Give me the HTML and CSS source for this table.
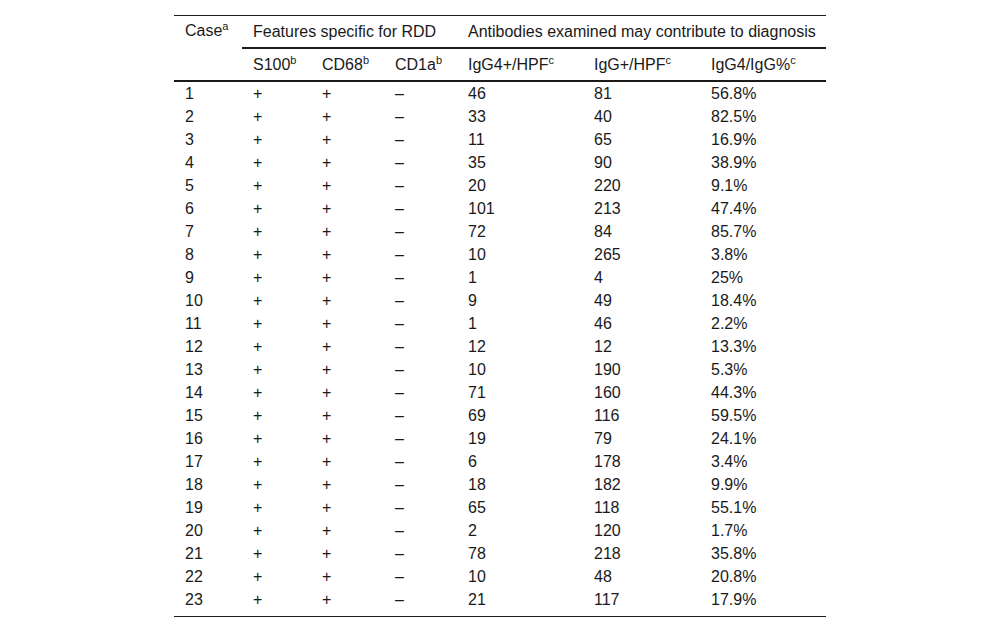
FILE: index.html
```html
<!DOCTYPE html>
<html>
<head>
<meta charset="utf-8">
<link rel="stylesheet" href="styles.css">
</head>
<body>
<div class="page">
<table class="data">
<colgroup>
<col class="c1"><col class="c2"><col class="c3"><col class="c4"><col class="c5"><col class="c6"><col class="c7">
</colgroup>
<thead>
<tr class="h1">
<th rowspan="2" class="case">Case<sup>a</sup></th>
<th colspan="3" class="group">Features specific for RDD</th>
<th colspan="3" class="group">Antibodies examined may contribute to diagnosis</th>
</tr>
<tr class="h2">
<th>S100<sup>b</sup></th>
<th>CD68<sup>b</sup></th>
<th>CD1a<sup>b</sup></th>
<th>IgG4+/HPF<sup>c</sup></th>
<th>IgG+/HPF<sup>c</sup></th>
<th>IgG4/IgG%<sup>c</sup></th>
</tr>
</thead>
<tbody>
<tr><td>1</td><td>+</td><td>+</td><td>–</td><td>46</td><td>81</td><td>56.8%</td></tr>
<tr><td>2</td><td>+</td><td>+</td><td>–</td><td>33</td><td>40</td><td>82.5%</td></tr>
<tr><td>3</td><td>+</td><td>+</td><td>–</td><td>11</td><td>65</td><td>16.9%</td></tr>
<tr><td>4</td><td>+</td><td>+</td><td>–</td><td>35</td><td>90</td><td>38.9%</td></tr>
<tr><td>5</td><td>+</td><td>+</td><td>–</td><td>20</td><td>220</td><td>9.1%</td></tr>
<tr><td>6</td><td>+</td><td>+</td><td>–</td><td>101</td><td>213</td><td>47.4%</td></tr>
<tr><td>7</td><td>+</td><td>+</td><td>–</td><td>72</td><td>84</td><td>85.7%</td></tr>
<tr><td>8</td><td>+</td><td>+</td><td>–</td><td>10</td><td>265</td><td>3.8%</td></tr>
<tr><td>9</td><td>+</td><td>+</td><td>–</td><td>1</td><td>4</td><td>25%</td></tr>
<tr><td>10</td><td>+</td><td>+</td><td>–</td><td>9</td><td>49</td><td>18.4%</td></tr>
<tr><td>11</td><td>+</td><td>+</td><td>–</td><td>1</td><td>46</td><td>2.2%</td></tr>
<tr><td>12</td><td>+</td><td>+</td><td>–</td><td>12</td><td>12</td><td>13.3%</td></tr>
<tr><td>13</td><td>+</td><td>+</td><td>–</td><td>10</td><td>190</td><td>5.3%</td></tr>
<tr><td>14</td><td>+</td><td>+</td><td>–</td><td>71</td><td>160</td><td>44.3%</td></tr>
<tr><td>15</td><td>+</td><td>+</td><td>–</td><td>69</td><td>116</td><td>59.5%</td></tr>
<tr><td>16</td><td>+</td><td>+</td><td>–</td><td>19</td><td>79</td><td>24.1%</td></tr>
<tr><td>17</td><td>+</td><td>+</td><td>–</td><td>6</td><td>178</td><td>3.4%</td></tr>
<tr><td>18</td><td>+</td><td>+</td><td>–</td><td>18</td><td>182</td><td>9.9%</td></tr>
<tr><td>19</td><td>+</td><td>+</td><td>–</td><td>65</td><td>118</td><td>55.1%</td></tr>
<tr><td>20</td><td>+</td><td>+</td><td>–</td><td>2</td><td>120</td><td>1.7%</td></tr>
<tr><td>21</td><td>+</td><td>+</td><td>–</td><td>78</td><td>218</td><td>35.8%</td></tr>
<tr><td>22</td><td>+</td><td>+</td><td>–</td><td>10</td><td>48</td><td>20.8%</td></tr>
<tr class="last"><td>23</td><td>+</td><td>+</td><td>–</td><td>21</td><td>117</td><td>17.9%</td></tr>
</tbody>
</table>
</div>
</body>
</html>
```

FILE: styles.css
```css
html, body {
  margin: 0;
  padding: 0;
  background: #fff;
}
.page {
  padding-top: 15px;
  display: flex;
  justify-content: center;
}
.data {
  width: 652px;
  table-layout: fixed;
  border-collapse: collapse;
  font-family: "Liberation Sans", Arial, sans-serif;
  font-size: 16px;
  color: #1a1a1a;
  border-top: 1px solid #1a1a1a;
  border-bottom: 1px solid #1a1a1a;
}
.c1 { width: 68px; }
.c2 { width: 69px; }
.c3 { width: 73px; }
.c4 { width: 73px; }
.c5 { width: 126px; }
.c6 { width: 117px; }
.c7 { width: 126px; }
.data th,
.data td {
  text-align: left;
  font-weight: normal;
  padding: 0 2px 0 11px;
  white-space: nowrap;
}
.data th {
  height: 31px;
  line-height: 18px;
  vertical-align: middle;
}
.data .case {
  vertical-align: top;
  padding-top: 6px;
  border-bottom: 2px solid #1a1a1a;
}
.data .group {
  border-bottom: 2px solid #1a1a1a;
}
.h2 th {
  border-bottom: 2px solid #1a1a1a;
}
.data td {
  height: 23px;
  line-height: 18px;
  vertical-align: middle;
}
.data tr.last td {
  height: 23px;
  padding-bottom: 5px;
}
sup {
  font-size: 11px;
  line-height: 0;
  vertical-align: 6px;
}
```
